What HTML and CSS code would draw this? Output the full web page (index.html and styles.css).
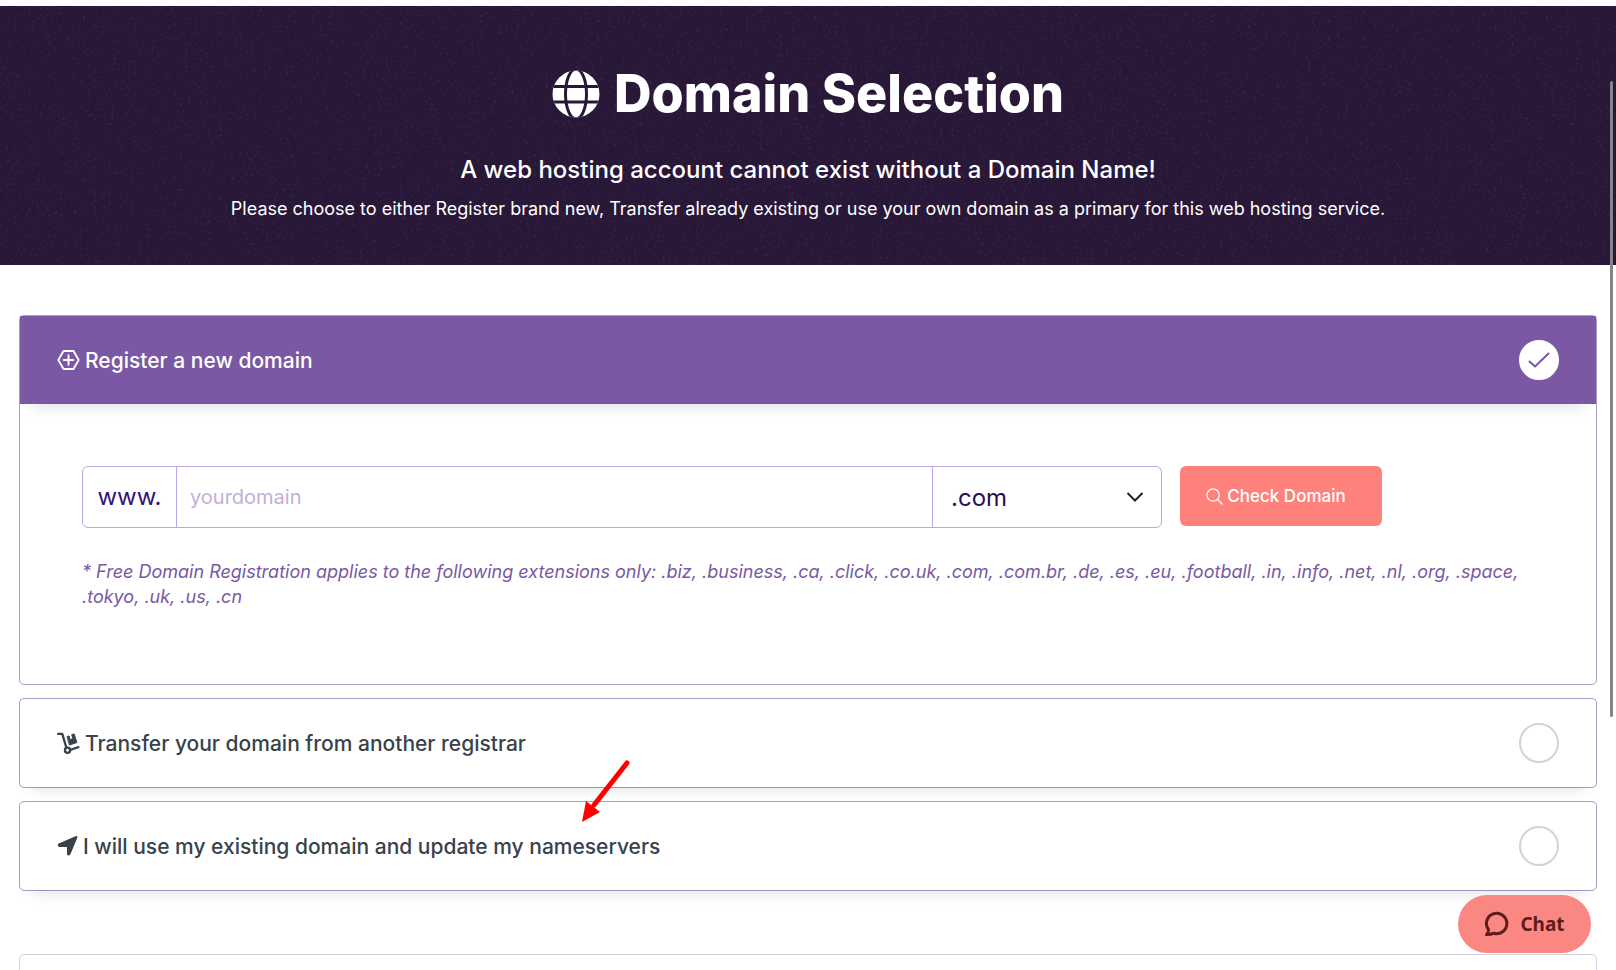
FILE: index.html
```html
<!DOCTYPE html>
<html lang="en">
<head>
<meta charset="utf-8">
<title>Domain Selection</title>
<link rel="stylesheet" href="styles.css">
</head>
<body>
<header class="banner">
  <svg class="grain" aria-hidden="true">
    <filter id="grain" x="0" y="0" width="100%" height="100%">
      <feTurbulence type="fractalNoise" baseFrequency="0.35" numOctaves="4" seed="7"/>
      <feColorMatrix values="0 0 0 0 0.75  0 0 0 0 0.7  0 0 0 0 0.85  1.6 0.8 0 0 -1.3"/>
    </filter>
    <rect width="100%" height="100%" filter="url(#grain)"/>
  </svg>
  <h1 class="title">
    <svg class="globe" viewBox="0 0 48 48" aria-hidden="true">
      <defs><clipPath id="disc"><circle cx="24" cy="24" r="23.500"/></clipPath></defs>
      <g clip-path="url(#disc)">
        <rect width="48" height="48" fill="#fff"/>
        <path d="M0 16.5h48M0 32h48" stroke="#281737" stroke-width="3"/>
        <ellipse cx="24" cy="24" rx="10.5" ry="25" fill="none" stroke="#281737" stroke-width="3"/>
      </g>
    </svg>
    Domain Selection
  </h1>
  <p class="lead">A web hosting account cannot exist without a Domain Name!</p>
  <p class="intro">Please choose to either Register brand new, Transfer already existing or use your own domain as a primary for this web hosting service.</p>
</header>

<main class="options">
  <section class="card">
    <label class="option option-active">
      <svg class="icon" viewBox="0 0 24 24" fill="none" stroke="currentColor" stroke-width="2" stroke-linejoin="round" stroke-linecap="round" aria-hidden="true">
        <path d="M6.8 2.600h10.400L22.600 12l-5.400 9.400H6.800L1.400 12zM12 7v10M7 12h10"/>
      </svg>
      <span class="option-text">Register a new domain</span>
      <span class="choice">
        <input class="radio" type="radio" name="domain" checked>
        <svg class="check" viewBox="0 0 40 40" fill="none" stroke="#7a58a4" stroke-width="2" stroke-linecap="round" stroke-linejoin="round" aria-hidden="true"><path d="M10.500 21.500l5.500 5L29.500 13.500"/></svg>
      </span>
    </label>
    <form class="panel">
      <div class="search">
        <div class="group">
          <label class="prefix" for="name">www.</label>
          <input class="name" id="name" type="text" placeholder="yourdomain">
          <div class="tld">
            <select class="tld-select" aria-label="Extension"><option>.com</option></select>
            <svg class="chevron" viewBox="0 0 18 12" fill="none" stroke="#222" stroke-width="2" aria-hidden="true"><path d="M1.500 2L9 9.500 16.500 2"/></svg>
          </div>
        </div>
        <button class="submit" type="button">
          <svg class="lens" viewBox="0 0 18 18" fill="none" stroke="currentColor" stroke-width="1.300" stroke-linecap="round" aria-hidden="true"><circle cx="7.500" cy="7.500" r="6.500"/><path d="M12.200 12.200L17 17"/></svg>
          Check Domain
        </button>
      </div>
      <p class="note">* Free Domain Registration applies to the following extensions only: .biz, .business, .ca, .click, .co.uk, .com, .com.br, .de, .es, .eu, .football, .in, .info, .net, .nl, .org, .space, .tokyo, .uk, .us, .cn</p>
    </form>
  </section>

  <section class="card">
    <label class="option">
      <svg class="icon" viewBox="0 0 24 24" fill="none" stroke="currentColor" stroke-width="2.400" stroke-linecap="round" stroke-linejoin="round" aria-hidden="true">
        <path d="M1.200 2.500H5.500L9.700 16.700M13.500 19.300l8.800-2.900"/>
        <circle cx="11" cy="19.600" r="2.700"/>
        <path d="M10.800 5.200l1.800-.6 1.300 4.200 2.600-1.800-1.200-3.700 2.600-.8 2.900 9-7.500 2.500z" fill="currentColor" stroke-width="1"/>
      </svg>
      <span class="option-text">Transfer your domain from another registrar</span>
      <input class="radio" type="radio" name="domain">
    </label>
  </section>

  <section class="card">
    <label class="option">
      <svg class="icon icon-narrow" viewBox="0 0 20 24" fill="currentColor" aria-hidden="true">
        <path d="M18 2.200Q20.400 1.600 19.700 4L12.800 20.400Q11.200 22.600 9.500 20.600V13H1.600Q-.8 11.300 1.200 9.400z"/>
      </svg>
      <span class="option-text">I will use my existing domain and update my nameservers</span>
      <input class="radio" type="radio" name="domain">
    </label>
  </section>

  <section class="card card-next"></section>
</main>

<svg class="pointer" viewBox="0 0 50 64" aria-hidden="true">
  <path d="M45 4L12 46" stroke="#f00" stroke-width="5" stroke-linecap="round"/>
  <path d="M0 63L4 42l14 11z" fill="#f00"/>
</svg>

<button class="chat" type="button">
  <svg class="bubble" viewBox="0 0 26 26" fill="none" stroke="currentColor" stroke-width="3" stroke-linejoin="round" aria-hidden="true"><path d="M2.500 23.500Q5 21 4.400 18.500A10.200 10.200 0 1 1 9.500 22.200Q6 24 2.500 23.500z"/></svg>
  Chat
</button>
<div class="scroll-thumb"></div>
</body>
</html>
```
FILE: styles.css
```css
* { box-sizing: border-box; }

body {
  margin: 0;
  padding-top: 6px;
  height: 100vh;
  overflow: hidden;
  background: #fff;
  font-family: Inter, "Liberation Sans", sans-serif;
  color: #37424a;
}

.banner {
  position: relative;
  height: 259px;
  padding-top: 56px;
  background: #281737;
  color: #fff;
  text-align: center;
}
.grain { position: absolute; inset: 0; width: 100%; height: 100%; opacity: .14; }
.title {
  position: relative;
  display: flex;
  justify-content: center;
  align-items: center;
  gap: 14px;
  margin: 0;
  font-size: 52px;
  line-height: 64px;
  font-weight: 800;
}
.globe { width: 48px; height: 48px; }
.lead { position: relative; margin: 28px 0 0; font-size: 24px; line-height: 32px; font-weight: 500; }
.intro { position: relative; margin: 7px 0 0; font-size: 18px; line-height: 32px; }

.options { display: flex; flex-direction: column; gap: 13px; padding: 50px 19px 0; }
.card { border: 1px solid #aa9cc8; border-radius: 5px; background: #fff; }
.option {
  display: flex;
  align-items: center;
  height: 88px;
  padding: 0 37px;
  border-radius: 4px;
  box-shadow: 0 14px 14px -12px rgba(0, 0, 0, .13);
  font-size: 21px;
  font-weight: 500;
}
.option-active { border-radius: 0; background: #7a58a4; color: #fff; }
.option-text { flex: 1; margin-left: 5px; }
.icon { width: 23px; height: 24px; }
.icon-narrow { width: 21px; }
.choice { display: grid; }
.choice > * { grid-area: 1 / 1; }
.radio {
  appearance: none;
  width: 40px;
  height: 40px;
  margin: 0;
  border: 2px solid #ced4da;
  border-radius: 50%;
  background: #fff;
}
.radio:checked { border-color: #fff; }
.check { position: relative; width: 40px; height: 40px; pointer-events: none; }

.panel { min-height: 280px; padding: 62px; }
.search { display: flex; align-items: flex-start; gap: 18px; }
.group {
  display: flex;
  flex: 0 1 1080px;
  height: 62px;
  border: 1px solid #bba6e6;
  border-radius: 6px;
}
.prefix, .tld-select { font-size: 24px; color: #35127d; }
.prefix { flex: 0 0 94px; line-height: 60px; text-align: center; border-right: 1px solid #bba6e6; }
.name {
  flex: 1;
  min-width: 0;
  padding: 0 13px;
  border: 0;
  border-right: 1px solid #bba6e6;
  background: none;
  font: 20px Inter, sans-serif;
}
.name::placeholder { color: #c2afd9; }
.tld { display: grid; flex: 0 0 228px; align-items: center; }
.tld > * { grid-area: 1 / 1; }
.tld-select {
  appearance: none;
  height: 60px;
  padding: 0 18px;
  border: 0;
  background: none;
  font-family: inherit;
  color: #2c0f4d;
}
.chevron { width: 18px; height: 12px; margin-right: 17px; justify-self: end; pointer-events: none; }
.submit {
  display: flex;
  align-items: center;
  justify-content: center;
  gap: 4px;
  width: 202px;
  height: 60px;
  padding: 0 10px 0 0;
  border: 0;
  border-radius: 6px;
  background: #ff817b;
  color: #fff;
  font: 500 17px Inter, sans-serif;
}
.lens { width: 17px; height: 17px; }
.note { margin: 31px 0 0; font-size: 18px; line-height: 25px; font-style: italic; color: #7a58a4; }
.card-next { height: 90px; margin-top: 50px; border-color: #cfcfdf; }

.pointer { position: absolute; left: 582px; top: 759px; width: 50px; height: 64px; }
.chat {
  position: fixed;
  right: 25px;
  bottom: 17px;
  display: flex;
  align-items: center;
  justify-content: center;
  gap: 10px;
  width: 133px;
  height: 58px;
  border: 0;
  border-radius: 29px;
  background: #fb8782;
  color: #5f1c1c;
  font: 700 19px "Noto Sans", sans-serif;
}
.bubble { width: 26px; height: 26px; }
.scroll-thumb {
  position: fixed;
  top: 81px;
  right: 3px;
  width: 3px;
  height: 636px;
  border-radius: 2px;
  background: #858585;
}
```
